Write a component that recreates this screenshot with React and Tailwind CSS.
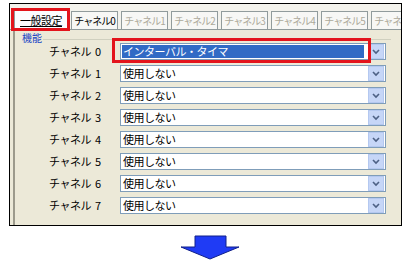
const font = { fontFamily: '"Noto Sans CJK JP", "Liberation Sans", sans-serif' };

const tabs = ['チャネル0', 'チャネル1', 'チャネル2', 'チャネル3', 'チャネル4', 'チャネル5', 'チャネル6'];
const rows = [0, 1, 2, 3, 4, 5, 6, 7];

function Chevron() {
  return (
    <div className="w-[16px] h-[15px] shrink-0 bg-[#c6d6f7] border border-[#b4c8f0] flex items-center justify-center">
      <svg width="8" height="6" viewBox="0 0 8 6">
        <path d="M1 1 L4 4 L7 1" stroke="#4d6185" strokeWidth="1.6" fill="none" />
      </svg>
    </div>
  );
}

export default function App() {
  return (
    <div className="w-[409px] h-[262px] bg-white relative text-[11px] text-black" style={font}>
      <div className="absolute left-[9px] top-[3px] w-[393px] h-[223px] border border-black bg-[#f3f2ec] overflow-hidden">
        <div className="flex items-end h-[25px] pl-[4px] gap-[3px] whitespace-nowrap">
          <div className="h-[19px] w-[54px] shrink-0 bg-[#fcfcfe] border border-[#919b9c] border-b-0 flex items-center justify-center">
            <span className="underline text-[11px] tracking-[-0.5px]">一般設定</span>
          </div>
          {tabs.map((t, i) => (
            <div
              key={t}
              className={`h-[18px] w-[47px] shrink-0 border border-[#919b9c] border-b-0 flex items-center justify-center bg-[#f7f7f5] text-[10px] tracking-[-1px] ${i === 0 ? 'text-black' : 'text-[#aca899]'}`}
            >
              {t}
            </div>
          ))}
        </div>
        <div className="bg-[#ece9d8] border-t border-[#919b9c] h-full pl-[3px]">
          <div className="border-l-2 border-[#9c9a8c] h-full pt-[3px] pl-[6px]">
            <div className="relative border-t border-[#d0d0bf] mt-[6px] mr-[10px]">
              <span className="absolute -top-[9px] left-[0px] bg-[#ece9d8] px-[1px] text-[#1a44c4] text-[10px] leading-[14px]">機能</span>
            </div>
            <div className="flex flex-col gap-[5px] mt-[3px]">
              {rows.map((r) => (
                <div key={r} className="flex items-center h-[17px]">
                  <div className="w-[99px] pl-[28px] text-[11px] tracking-[-0.5px] whitespace-nowrap">
                    チャネル<span className="ml-[4px]">{r}</span>
                  </div>
                  <div className="w-[266px] h-[17px] bg-white border border-[#7f9db9] flex items-center pl-[1px] pr-[1px]">
                    <div className={`flex-1 h-[13px] flex items-center text-[11px] tracking-[-0.5px] whitespace-nowrap ${r === 0 ? 'bg-[#316ac5] text-white' : ''} pl-[1px] mr-[4px]`}>
                      {r === 0 ? 'インターバル・タイマ' : '使用しない'}
                    </div>
                    <Chevron />
                  </div>
                </div>
              ))}
            </div>
          </div>
        </div>
      </div>
      <div className="absolute left-[11px] top-[8px] w-[59px] h-[23px] border-[3px] border-[#e3141c]" />
      <div className="absolute left-[112px] top-[38px] w-[259px] h-[25px] border-[3px] border-[#e3141c]" />
      <svg className="absolute left-[179px] top-[235px]" width="62" height="25" viewBox="0 0 62 25">
        <path d="M16 1 H47 V12 H60 L31 24 L2 12 H16 Z" fill="#1f3bf5" stroke="#10208a" strokeWidth="1" />
      </svg>
    </div>
  );
}
